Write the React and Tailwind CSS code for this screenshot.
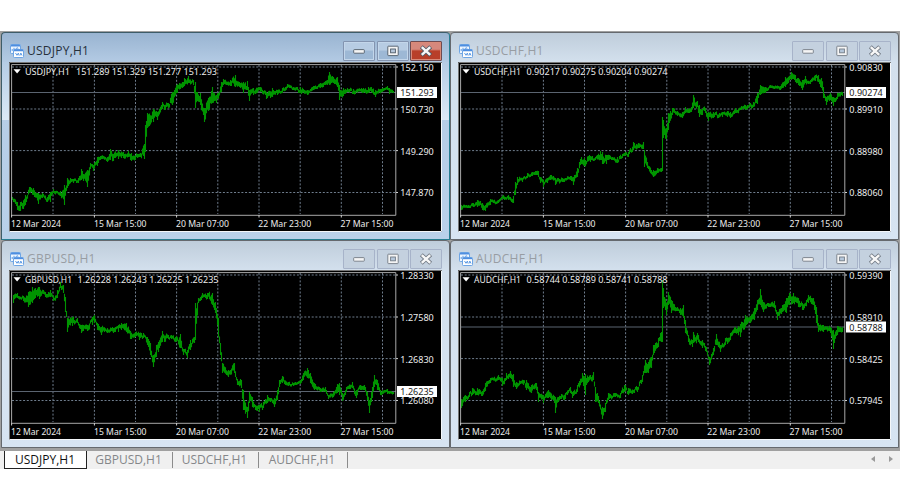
import React from 'react';

const usdjpy = [
  [12, 197, 200], [17, 202, 210], [20, 202, 211], [25, 195, 205], [29, 187, 193], [33, 188, 195], [38, 193, 204],
  [42, 193, 198], [47, 197, 202], [50, 192, 202], [53, 189, 193], [60, 191, 196], [64, 185, 205], [67, 178, 188],
  [73, 179, 183], [78, 178, 183], [81, 169, 180], [83, 174, 181], [87, 170, 187], [90, 163, 169], [93, 165, 171],
  [97, 157, 166], [100, 156, 160], [107, 157, 162], [110, 149, 160], [113, 154, 161], [118, 150, 159], [123, 152, 158],
  [128, 151, 157], [131, 153, 161], [137, 154, 158], [140, 153, 157], [144, 144, 159], [145, 125, 152], [147, 113, 128],
  [153, 109, 122], [157, 112, 120], [162, 102, 109], [168, 103, 108], [172, 92, 105], [177, 84, 93], [182, 82, 88],
  [184, 78, 86], [188, 76, 83], [193, 80, 85], [195, 82, 108], [197, 92, 101], [200, 93, 105], [204, 108, 122],
  [208, 98, 111], [212, 87, 103], [216, 95, 103], [221, 82, 92], [223, 79, 85], [230, 80, 86], [235, 75, 87],
  [240, 83, 88], [243, 82, 93], [247, 81, 90], [249, 90, 101], [253, 88, 95], [260, 87, 92], [266, 92, 99],
  [272, 88, 97], [277, 90, 95], [282, 88, 93], [287, 84, 88], [293, 87, 90], [300, 87, 93], [307, 90, 95],
  [313, 86, 90], [320, 83, 88], [327, 80, 85], [329, 72, 85], [333, 77, 83], [337, 77, 87], [339, 85, 100],
  [343, 88, 96], [347, 88, 92], [353, 89, 94], [363, 88, 93], [368, 87, 93], [375, 90, 97], [382, 88, 92],
  [387, 86, 90], [389, 88, 94], [393, 91, 93],
];

const usdchf = [
  [12, 205, 210], [19, 205, 208], [24, 203, 207], [28, 200, 207], [31, 201, 205], [33, 203, 210], [36, 205, 211],
  [41, 199, 205], [49, 200, 203], [54, 195, 199], [59, 195, 200], [64, 196, 203], [66, 182, 195], [68, 177, 185],
  [73, 178, 182], [78, 173, 178], [83, 172, 176], [89, 171, 177], [91, 177, 183], [94, 180, 187], [98, 178, 183],
  [101, 175, 180], [106, 178, 185], [113, 178, 182], [122, 176, 181], [124, 177, 185], [128, 168, 177], [132, 157, 164],
  [135, 158, 166], [141, 156, 162], [146, 157, 160], [151, 151, 160], [153, 152, 164], [157, 155, 164], [163, 157, 160],
  [168, 157, 163], [173, 154, 158], [179, 152, 157], [184, 142, 150], [189, 143, 148], [194, 142, 149], [195, 150, 167],
  [198, 162, 168], [204, 170, 177], [208, 168, 173], [212, 168, 172], [213, 117, 171], [214, 120, 138], [217, 128, 139],
  [219, 113, 130], [223, 108, 115], [228, 111, 116], [233, 112, 118], [236, 107, 113], [242, 107, 112], [244, 95, 108],
  [248, 101, 107], [250, 105, 117], [256, 108, 113], [259, 112, 121], [264, 112, 118], [273, 112, 117], [278, 111, 117],
  [281, 112, 118], [286, 108, 113], [296, 105, 110], [304, 102, 107], [308, 93, 104], [311, 85, 95], [316, 87, 93],
  [321, 85, 88], [331, 86, 90], [336, 77, 87], [342, 72, 80], [346, 75, 82], [353, 80, 90], [356, 76, 83],
  [361, 80, 84], [366, 75, 81], [369, 75, 82], [372, 78, 88], [374, 87, 98], [377, 97, 105], [381, 93, 100],
  [384, 97, 106], [388, 93, 99], [393, 92, 96],
];

const gbpusd = [
  [13, 87, 95], [17, 85, 90], [23, 88, 93], [28, 84, 99], [32, 79, 95], [35, 80, 90], [39, 79, 91], [45, 84, 89],
  [50, 82, 89], [53, 88, 93], [57, 82, 90], [60, 74, 80], [63, 77, 85], [65, 89, 104], [67, 110, 124], [72, 109, 118],
  [77, 110, 115], [81, 117, 125], [87, 117, 123], [92, 109, 117], [94, 107, 115], [97, 115, 122], [101, 119, 127],
  [107, 120, 125], [113, 120, 125], [118, 117, 124], [121, 115, 122], [126, 115, 124], [130, 123, 131], [135, 124, 129],
  [139, 125, 132], [143, 125, 130], [147, 129, 137], [150, 135, 147], [153, 147, 159], [156, 137, 149], [158, 134, 144],
  [162, 123, 134], [168, 127, 131], [175, 129, 134], [180, 126, 140], [183, 141, 147], [187, 142, 150], [190, 132, 142],
  [194, 129, 135], [195, 95, 132], [198, 90, 95], [202, 85, 90], [207, 85, 91], [212, 85, 97], [215, 94, 105],
  [218, 110, 129], [220, 135, 147], [222, 155, 165], [228, 162, 169], [234, 155, 165], [237, 171, 177], [241, 172, 180],
  [243, 182, 202], [247, 199, 210], [249, 184, 195], [252, 189, 199], [255, 197, 202], [259, 197, 204], [263, 194, 200],
  [267, 187, 195], [270, 190, 194], [274, 190, 199], [277, 182, 192], [279, 172, 179], [282, 168, 175], [288, 174, 178],
  [293, 175, 178], [300, 172, 176], [303, 165, 172], [307, 160, 170], [310, 165, 175], [314, 175, 182], [320, 180, 184],
  [325, 179, 184], [328, 187, 191], [333, 184, 189], [337, 176, 185], [339, 175, 187], [342, 185, 193], [346, 179, 184],
  [352, 174, 180], [356, 182, 190], [360, 177, 182], [364, 177, 182], [367, 184, 192], [369, 192, 205], [372, 179, 190],
  [374, 167, 179], [377, 172, 182], [380, 182, 187], [387, 181, 186], [393, 184, 186],
];

const audchf = [
  [12, 191, 200], [16, 187, 194], [20, 184, 189], [23, 180, 187], [28, 180, 187], [33, 183, 188], [36, 175, 183],
  [41, 170, 175], [49, 167, 172], [53, 170, 178], [57, 165, 172], [61, 163, 170], [64, 166, 179], [67, 174, 181],
  [74, 172, 177], [77, 172, 182], [82, 177, 185], [87, 175, 182], [89, 184, 194], [94, 187, 195], [99, 182, 190],
  [105, 188, 195], [106, 189, 205], [109, 189, 194], [116, 185, 191], [121, 179, 185], [123, 184, 190], [128, 177, 184],
  [133, 165, 174], [136, 166, 187], [139, 169, 174], [144, 164, 172], [146, 179, 194], [149, 188, 195], [153, 199, 211],
  [156, 195, 204], [159, 185, 192], [166, 185, 189], [171, 185, 190], [175, 177, 184], [179, 180, 187], [188, 179, 184],
  [193, 167, 174], [196, 152, 165], [199, 154, 165], [202, 149, 160], [204, 137, 147], [209, 130, 139], [212, 124, 134],
  [213, 72, 134], [214, 80, 100], [217, 95, 107], [219, 84, 97], [222, 92, 105], [228, 99, 103], [231, 100, 107],
  [234, 97, 109], [236, 112, 125], [239, 127, 134], [243, 132, 139], [244, 124, 135], [249, 127, 134], [253, 132, 140],
  [257, 139, 144], [260, 149, 157], [264, 140, 147], [267, 126, 137], [271, 137, 144], [276, 130, 137], [281, 125, 132],
  [286, 119, 125], [291, 116, 129], [296, 107, 119], [301, 108, 115], [305, 100, 112], [308, 92, 102], [311, 81, 97],
  [314, 94, 104], [319, 95, 99], [325, 93, 100], [328, 104, 112], [333, 97, 104], [337, 90, 105], [340, 85, 97],
  [344, 85, 95], [349, 90, 99], [353, 95, 102], [359, 87, 95], [364, 90, 97], [367, 99, 115], [369, 115, 124],
  [374, 117, 124], [381, 119, 125], [384, 122, 141], [388, 118, 127], [393, 119, 124],
];

const charts = [
  {
    symbol: 'USDJPY,H1', active: true, data: usdjpy, nameWidth: 45, quoteX: 76,
    quote: '151.289 151.329 151.277 151.293',
    prices: ['152.150', '150.730', '149.290', '147.870'], last: '151.293', lastY: 92.5,
  },
  {
    symbol: 'USDCHF,H1', data: usdchf, nameWidth: 47, quoteX: 77.5,
    quote: '0.90217 0.90275 0.90204 0.90274',
    prices: ['0.90830', '0.89910', '0.88980', '0.88060'], last: '0.90274', lastY: 92.5,
  },
  {
    symbol: 'GBPUSD,H1', data: gbpusd, nameWidth: 47, quoteX: 77.5,
    quote: '1.26228 1.26243 1.26225 1.26235',
    prices: ['1.28330', '1.27580', '1.26830', '1.26080'], last: '1.26235', lastY: 183.5,
  },
  {
    symbol: 'AUDCHF,H1', data: audchf, nameWidth: 47, quoteX: 77.5,
    quote: '0.58744 0.58789 0.58741 0.58788',
    prices: ['0.59390', '0.58910', '0.58425', '0.57945'], last: '0.58788', lastY: 119,
  },
];

const dates = [
  [11, '12 Mar 2024', 50],
  [94, '15 Mar 15:00', 52.5],
  [176, '20 Mar 07:00', 53],
  [258.3, '22 Mar 23:00', 53],
  [340.5, '27 Mar 15:00', 53],
];

const gridX = [53, 94.4, 135.5, 176.6, 217.8, 259, 300.2, 341.3, 382.5];
const gridY = [67, 109, 150.6, 192.5];

const random = (seed) => {
  const n = Math.sin(seed * 12.9898) * 43758.5453;
  return n - Math.floor(n);
};

// One high/low bar per pixel, with a little jitter between the known bars
const toBars = (data) => {
  let d = '';
  for (let i = 0; i < data.length; i++) {
    const [x0, h0, l0] = data[i];
    d += `M${x0 + 0.5} ${h0}V${l0}`;
    if (i === data.length - 1) break;
    const [x1, h1, l1] = data[i + 1];
    for (let x = x0 + 1; x < x1; x++) {
      const t = (x - x0) / (x1 - x0);
      const hi = h0 + (h1 - h0) * t;
      const lo = l0 + (l1 - l0) * t;
      // neighbouring pixels share a shift, so the line moves in short steps
      const shift = (random(Math.floor(x / 2) + i) - 0.5) * Math.min(4, (lo - hi) * 0.6);
      const size = Math.max(2.6, (lo - hi) * (0.4 + 0.5 * random(x + 7)));
      const mid = (hi + lo) / 2 + shift;
      d += `M${x + 0.5} ${(mid - size / 2).toFixed(1)}V${(mid + size / 2).toFixed(1)}`;
    }
  }
  return d;
};

const Label = ({ x, y, w, fill = '#ececec', children }) => (
  <text x={x} y={y} fill={fill} textLength={w} lengthAdjust="spacingAndGlyphs">
    {children}
  </text>
);

const Chart = ({ chart }) => (
  <svg viewBox="9 62 433 170" width="433" height="170" className="block bg-black font-['Noto_Sans',sans-serif] text-[9.6px]">
    {/* Sunken edge */}
    <path d="M9.5 232V62.5H442" stroke="#777777" fill="none" />
    <path d="M9.5 231.5H441.5V63" stroke="#f4f7fa" fill="none" />

    {/* Grid */}
    <g stroke="#6f7d8d" strokeDasharray="2 1.7">
      {gridX.map((x) => (
        <line key={x} x1={x} x2={x} y1="65" y2="214" />
      ))}
      {gridY.map((y) => (
        <line key={y} x1="12" x2="395" y1={y} y2={y} />
      ))}
    </g>

    {/* Current price */}
    <line x1="12" x2="396" y1={chart.lastY} y2={chart.lastY} stroke="#5b6470" />

    <path d={toBars(chart.data)} stroke="#009400" strokeWidth="1.1" fill="none" />

    {/* Plot frame and ticks */}
    <path d="M11.6 64.6H395.8V215.3H11.6Z" stroke="#a8a8a8" fill="none" />
    {[11.6, 94.4, 176.6, 259, 341.3].map((x) => (
      <line key={x} x1={x} x2={x} y1="215" y2="217.5" stroke="#d0d0d0" />
    ))}
    {gridY.map((y) => (
      <line key={y} x1="396" x2="398" y1={y} y2={y} stroke="#d0d0d0" />
    ))}

    <path d="M13.5 69.3H20.7L17.1 73.4Z" fill="#ffffff" />
    <Label x={25} y={75.2} w={chart.nameWidth}>{chart.symbol}</Label>
    <Label x={chart.quoteX} y={75.2} w={141}>{chart.quote}</Label>

    {chart.prices.map((price, i) => (
      <Label key={price} x={400.3} y={gridY[i] + 3.9} w={33.5}>{price}</Label>
    ))}
    <rect x="397" y={chart.lastY - 5.5} width="40" height="11" fill="#ffffff" />
    <Label x={400.3} y={chart.lastY + 3.5} w={33.5} fill="#222222">{chart.last}</Label>

    {dates.map(([x, text, w]) => (
      <Label key={text} x={x} y={226.5} w={w}>{text}</Label>
    ))}
  </svg>
);

const ChartIcon = () => (
  <svg width="14" height="14" viewBox="0 0 14 14" className="shrink-0">
    <rect x="0.5" y="0.5" width="10" height="9" rx="0.8" fill="#eef6ff" stroke="#6ea5e4" />
    <path d="M1 1.6H10" stroke="#4e8ee0" strokeWidth="1.7" />
    <path d="M2.2 7V5M4 6.5V3.8M5.5 5.5L7 3.6L8.5 5" stroke="#5f9ce4" fill="none" />
    <rect x="3.5" y="5.5" width="10" height="8" rx="0.8" fill="#ffffff" stroke="#6ea5e4" />
    <path d="M4 6.4H13" stroke="#4e8ee0" strokeWidth="1.6" />
    <path d="M5.5 9L7 11.3L8.4 9L9 11.5M10 11.5L10.8 9L12 11.5" stroke="#5f9ce4" fill="none" />
  </svg>
);

const CaptionButton = ({ active, close, children }) => {
  let look = 'border-[#a7b3c9] bg-[#c4d1df]';
  if (active) look = 'border-[#8394b0] bg-linear-to-b from-[#b7cce3] from-45% to-[#9db8d5] to-50% shadow-[inset_0_0_0_1px_#c3d6ea]';
  if (active && close) look = 'border-[#6e4a50] bg-linear-to-b from-[#d6887c] from-40% to-[#b83f29] to-50% shadow-[inset_0_0_0_1px_#d98a78]';
  return (
    <button className={`flex h-5 w-8 items-center justify-center rounded-[1px] border ${look}`}>
      <svg width="14" height="12" viewBox="0 0 14 12">{children}</svg>
    </button>
  );
};

const ChartWindow = ({ chart }) => {
  const { active } = chart;
  const frame = active
    ? 'border-[#3d5c68] border-b-[#287e91] border-r-[#287e91] bg-linear-to-b from-[#99b4d1] from-0% via-[#b5cce5] via-15% to-[#b9d1ea]'
    : 'border-[#65696e] bg-linear-to-b from-[#bfcddb] from-0% via-[#d3e0ed] via-14% to-[#d7e4f2]';
  const side = active ? 'bg-linear-to-b from-[#b5cce5] to-[#dce9f6]' : '';
  const ink = active ? '#4f5b68' : '#737b85';
  return (
    <div className={`h-[208px] w-[449px] overflow-hidden rounded-t-[4px] border ${frame}`}>
      <div className="flex h-[29px] items-center pr-[7px] pl-[7px]">
        <div className="flex grow items-center gap-[3px] pt-[6px] pl-px">
          <ChartIcon />
          <span className={`font-['Open_Sans',sans-serif] text-[12px] leading-[18px] tracking-[0.02em] ${active ? 'text-[#26303b]' : 'text-[#989da3]'}`}>
            {chart.symbol}
          </span>
        </div>
        <div className="flex gap-[1.5px] pt-[6px]">
          <CaptionButton active={active}>
            <rect x="1.7" y="4.6" width="10.6" height="3.6" rx="0.6" fill="#f5f5f5" stroke={ink} strokeWidth="0.9" />
          </CaptionButton>
          <CaptionButton active={active}>
            <rect x="1.8" y="1.2" width="10.4" height="9.4" rx="0.6" fill="#f5f5f5" stroke={ink} strokeWidth="0.9" />
            <rect x="4.6" y="4" width="4.8" height="3.8" fill="#b5c7db" stroke={ink} strokeWidth="0.9" />
          </CaptionButton>
          <CaptionButton active={active} close>
            <path d="M2.3 1.7L11.7 10.3M11.7 1.7L2.3 10.3" stroke={ink} strokeWidth="4.2" />
            <path d="M2.8 2.1L11.2 9.9M11.2 2.1L2.8 9.9" stroke="#f7f7f7" strokeWidth="2.5" />
          </CaptionButton>
        </div>
      </div>
      <div className="flex">
        <div className={`h-[58px] w-[7px] ${side}`} />
        <Chart chart={chart} />
        <div className={`h-[58px] w-[7px] ${side}`} />
      </div>
    </div>
  );
};

const tabs = [
  ['GBPUSD,H1', 'w-[86px]'],
  ['USDCHF,H1', 'w-[86px]'],
  ['AUDCHF,H1', 'w-[89px]'],
];

const App = () => {
  return (
    <div className="h-[500px] w-[900px] overflow-hidden bg-white pt-[31px]">
      <div className="h-[420px] border-t border-[#a0a0a0] bg-[#a0a0a0] pl-px">
        <div className="grid grid-cols-[449px_449px]">
          {charts.map((chart) => (
            <ChartWindow key={chart.symbol} chart={chart} />
          ))}
        </div>
      </div>

      {/* Tab strip */}
      <div className="flex h-[18px] items-center bg-[#f0f0f0] pl-1 font-['Open_Sans',sans-serif] text-[12px] text-[#85878a]">
        <div className="flex h-[18px] w-[83px] items-center justify-center border-r border-b border-l border-[#222222] bg-white pr-px text-[#111111]">
          USDJPY,H1
        </div>
        {tabs.map(([name, width]) => (
          <div key={name} className={`flex h-[16px] items-center justify-center border-r border-[#8c8c8c] pr-0.5 ${width}`}>
            {name}
          </div>
        ))}
        <div className="ml-auto flex gap-[14px] pr-[7px] pb-0.5">
          <svg width="4" height="6" viewBox="0 0 4 6"><path d="M4 0V6L0 3Z" fill="#9a9a9a" /></svg>
          <svg width="4" height="6" viewBox="0 0 4 6"><path d="M0 0V6L4 3Z" fill="#9a9a9a" /></svg>
        </div>
      </div>
    </div>
  );
};

export default App;
